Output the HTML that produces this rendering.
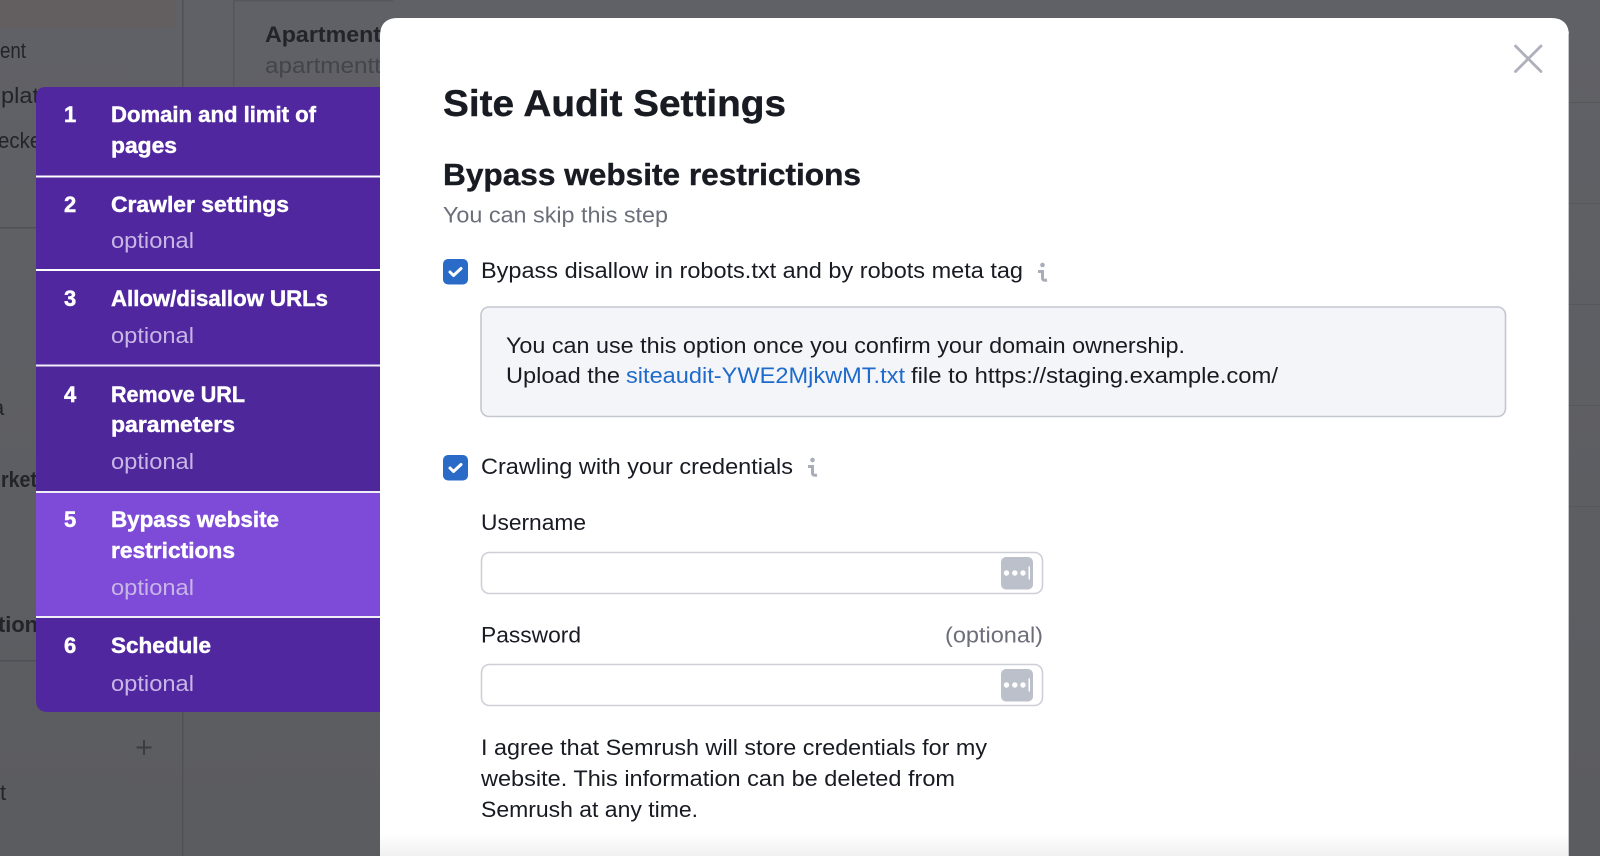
<!DOCTYPE html>
<html lang="en">
<head>
<meta charset="utf-8">
<title>Site Audit Settings</title>
<style>
html,body{margin:0;padding:0;width:1600px;height:856px;overflow:hidden;background:#5d5e63}
svg{display:block;position:absolute;left:0;top:0}
text{font-family:"Liberation Sans",sans-serif;white-space:pre}
.b{font-weight:700;stroke:#191b23;stroke-width:.4px}
.s{font-size:22px;font-weight:700;fill:#fff;stroke:#fff;stroke-width:.45px}
.o{font-size:22px;fill:#c8b6e6}
.t{font-size:22px;fill:#191b23}
.g{fill:#6c6e79;font-size:22px}
.bg{font-size:22px;fill:#232429}
.bb{font-weight:700}
</style>
</head>
<body>
<svg width="1600" height="856" viewBox="0 0 1600 856" xmlns="http://www.w3.org/2000/svg">
<defs>
<linearGradient id="fade" x1="0" y1="0" x2="0" y2="1"><stop offset="0" stop-color="#fff"/><stop offset="1" stop-color="#f0f0f0"/></linearGradient>
<linearGradient id="page" x1="0" y1="0" x2="0" y2="1"><stop offset="0" stop-color="#606166"/><stop offset="1" stop-color="#5b5c60"/></linearGradient>
</defs>

<!-- dimmed page -->
<rect width="1600" height="856" fill="url(#page)"/>
<path d="M0 0H175V20Q175 28 167 28H0Z" fill="#635e60"/>
<rect x="182" y="0" width="1.5" height="856" fill="#505156"/>
<rect x="233" y="0" width="1.5" height="100" fill="#56575c"/>
<rect x="233" y="0" width="160" height="1.5" fill="#56575c"/>
<rect x="0" y="227" width="182" height="1.5" fill="#505156"/>
<rect x="0" y="660" width="182" height="1.5" fill="#505156"/>
<rect x="1569" y="102" width="31" height="1" fill="#56575c"/>
<rect x="1569" y="203" width="31" height="1" fill="#56575c"/>
<rect x="1569" y="304" width="31" height="1" fill="#56575c"/>
<rect x="1569" y="405" width="31" height="1" fill="#56575c"/>
<rect x="1569" y="506" width="31" height="1" fill="#56575c"/>
<text class="bg bb" x="265" y="42" textLength="116" lengthAdjust="spacingAndGlyphs">Apartment</text>
<text class="bg" x="265" y="73" textLength="116" lengthAdjust="spacingAndGlyphs" style="fill:#43454b">apartmentt</text>
<text class="bg" x="0" y="58" textLength="26" lengthAdjust="spacingAndGlyphs">ent</text>
<text class="bg" x="1" y="103" textLength="38" lengthAdjust="spacingAndGlyphs">plat</text>
<text class="bg" x="-2" y="148" textLength="50" lengthAdjust="spacingAndGlyphs">ecker</text>
<text class="bg" x="-8" y="415">a</text>
<text class="bg bb" x="1" y="487" textLength="36" lengthAdjust="spacingAndGlyphs">rket</text>
<text class="bg bb" x="-2" y="632" textLength="40" lengthAdjust="spacingAndGlyphs">tion</text>
<text class="bg" x="0" y="800">t</text>
<path d="M144 740V755M136.500 747.500H151.500" stroke="#3c3d42" stroke-width="2" fill="none"/>

<!-- modal -->
<path d="M398 18H1551Q1569 18 1569 36V856H380V36Q380 18 398 18Z" fill="#fff"/>
<rect x="380" y="834" width="1189" height="22" fill="url(#fade)"/>
<rect x="1568" y="34" width="1" height="822" fill="#c5c6cb"/>

<!-- steps sidebar -->
<path d="M46 87H380V712H48Q36 712 36 700V97Q36 87 46 87Z" fill="#50279f"/>
<rect x="36" y="365" width="344" height="126" fill="#4e279b"/>
<rect x="36" y="493" width="344" height="123" fill="#7d4bd8"/>
<rect x="36" y="175.500" width="344" height="2" fill="#fff"/>
<rect x="36" y="269" width="344" height="2" fill="#fff"/>
<rect x="36" y="364.500" width="344" height="2" fill="#f0eef7"/>
<rect x="36" y="491" width="344" height="2" fill="#f0eef7"/>
<rect x="36" y="616" width="344" height="2" fill="#f0eef7"/>

<text class="s" x="64" y="122">1</text>
<text class="s" x="111" y="122" textLength="205" lengthAdjust="spacingAndGlyphs">Domain and limit of</text>
<text class="s" x="111" y="153" textLength="66" lengthAdjust="spacingAndGlyphs">pages</text>
<text class="s" x="64" y="212">2</text>
<text class="s" x="111" y="212" textLength="178" lengthAdjust="spacingAndGlyphs">Crawler settings</text>
<text class="o" x="111" y="248" textLength="83" lengthAdjust="spacingAndGlyphs">optional</text>
<text class="s" x="64" y="306">3</text>
<text class="s" x="111" y="306" textLength="217" lengthAdjust="spacingAndGlyphs">Allow/disallow URLs</text>
<text class="o" x="111" y="343" textLength="83" lengthAdjust="spacingAndGlyphs">optional</text>
<text class="s" x="64" y="402">4</text>
<text class="s" x="111" y="402" textLength="134" lengthAdjust="spacingAndGlyphs">Remove URL</text>
<text class="s" x="111" y="432" textLength="124" lengthAdjust="spacingAndGlyphs">parameters</text>
<text class="o" x="111" y="469" textLength="83" lengthAdjust="spacingAndGlyphs">optional</text>
<text class="s" x="64" y="527">5</text>
<text class="s" x="111" y="527" textLength="168" lengthAdjust="spacingAndGlyphs">Bypass website</text>
<text class="s" x="111" y="558" textLength="124" lengthAdjust="spacingAndGlyphs">restrictions</text>
<text class="o" x="111" y="595" textLength="83" lengthAdjust="spacingAndGlyphs">optional</text>
<text class="s" x="64" y="653">6</text>
<text class="s" x="111" y="653" textLength="100" lengthAdjust="spacingAndGlyphs">Schedule</text>
<text class="o" x="111" y="691" textLength="83" lengthAdjust="spacingAndGlyphs">optional</text>

<!-- close -->
<path d="M1515.500 46L1541 71.500M1541 46L1515.500 71.500" stroke="#aeb0bb" stroke-width="2.800" stroke-linecap="round" fill="none"/>

<!-- headings -->
<text class="b" x="443" y="116" font-size="37" fill="#191b23" textLength="343" lengthAdjust="spacingAndGlyphs">Site Audit Settings</text>
<text class="b" x="443" y="185" font-size="31" fill="#191b23" textLength="418" lengthAdjust="spacingAndGlyphs">Bypass website restrictions</text>
<text class="g" x="443" y="222.500" textLength="225" lengthAdjust="spacingAndGlyphs">You can skip this step</text>

<!-- checkbox 1 -->
<rect x="443" y="259" width="25" height="25.500" rx="5" fill="#2b6bc8"/>
<path d="M450 272L453.500 275.500L461 268.500" stroke="#fff" stroke-width="3" fill="none" stroke-linecap="round" stroke-linejoin="round"/>
<text class="t" x="481" y="278" textLength="542" lengthAdjust="spacingAndGlyphs">Bypass disallow in robots.txt and by robots meta tag</text>
<circle cx="1042.500" cy="265" r="2.300" fill="#a9adb9"/>
<path d="M1038 271.500H1042.500V278Q1042.500 281 1047 280" stroke="#a9adb9" stroke-width="3" fill="none"/>

<!-- info box -->
<rect x="481" y="307" width="1024.500" height="109.500" rx="8" fill="#f4f5f9" stroke="#c4c7cf" stroke-width="1.600"/>
<text class="t" x="506" y="353" textLength="679" lengthAdjust="spacingAndGlyphs">You can use this option once you confirm your domain ownership.</text>
<text class="t" x="506" y="383" textLength="114" lengthAdjust="spacingAndGlyphs">Upload the</text>
<text x="626" y="383" font-size="22" fill="#1f6bcb" textLength="279" lengthAdjust="spacingAndGlyphs">siteaudit-YWE2MjkwMT.txt</text>
<text class="t" x="911" y="383" textLength="367" lengthAdjust="spacingAndGlyphs">file to https://staging.example.com/</text>

<!-- checkbox 2 -->
<rect x="443" y="455" width="25" height="25.500" rx="5" fill="#2b6bc8"/>
<path d="M450 468L453.500 471.500L461 464.500" stroke="#fff" stroke-width="3" fill="none" stroke-linecap="round" stroke-linejoin="round"/>
<text class="t" x="481" y="474" textLength="312" lengthAdjust="spacingAndGlyphs">Crawling with your credentials</text>
<circle cx="812.500" cy="460" r="2.300" fill="#a9adb9"/>
<path d="M808 466.500H812.500V473Q812.500 476 817 475" stroke="#a9adb9" stroke-width="3" fill="none"/>

<!-- username -->
<text class="t" x="481" y="530" textLength="105" lengthAdjust="spacingAndGlyphs">Username</text>
<rect x="481.500" y="552.500" width="561" height="41" rx="8" fill="#fff" stroke="#cfd0d7" stroke-width="1.600"/>
<rect x="1001" y="557" width="32" height="32.500" rx="5" fill="#bcc0cb"/>
<circle cx="1006.500" cy="573" r="2.700" fill="#fff"/>
<circle cx="1014.800" cy="573" r="2.700" fill="#fff"/>
<circle cx="1023" cy="573" r="2.700" fill="#fff"/>
<rect x="1028.500" y="566.500" width="1.500" height="13" fill="#fff"/>

<!-- password -->
<text class="t" x="481" y="642.500" textLength="100" lengthAdjust="spacingAndGlyphs">Password</text>
<text class="g" x="945" y="642.500" textLength="98" lengthAdjust="spacingAndGlyphs">(optional)</text>
<rect x="481.500" y="664.500" width="561" height="41" rx="8" fill="#fff" stroke="#cfd0d7" stroke-width="1.600"/>
<rect x="1001" y="669" width="32" height="32.500" rx="5" fill="#bcc0cb"/>
<circle cx="1006.500" cy="685" r="2.700" fill="#fff"/>
<circle cx="1014.800" cy="685" r="2.700" fill="#fff"/>
<circle cx="1023" cy="685" r="2.700" fill="#fff"/>
<rect x="1028.500" y="678.500" width="1.500" height="13" fill="#fff"/>

<!-- agreement -->
<text class="t" x="481" y="755" textLength="506" lengthAdjust="spacingAndGlyphs">I agree that Semrush will store credentials for my</text>
<text class="t" x="481" y="786" textLength="474" lengthAdjust="spacingAndGlyphs">website. This information can be deleted from</text>
<text class="t" x="481" y="817" textLength="217" lengthAdjust="spacingAndGlyphs">Semrush at any time.</text>
</svg>
</body>
</html>
